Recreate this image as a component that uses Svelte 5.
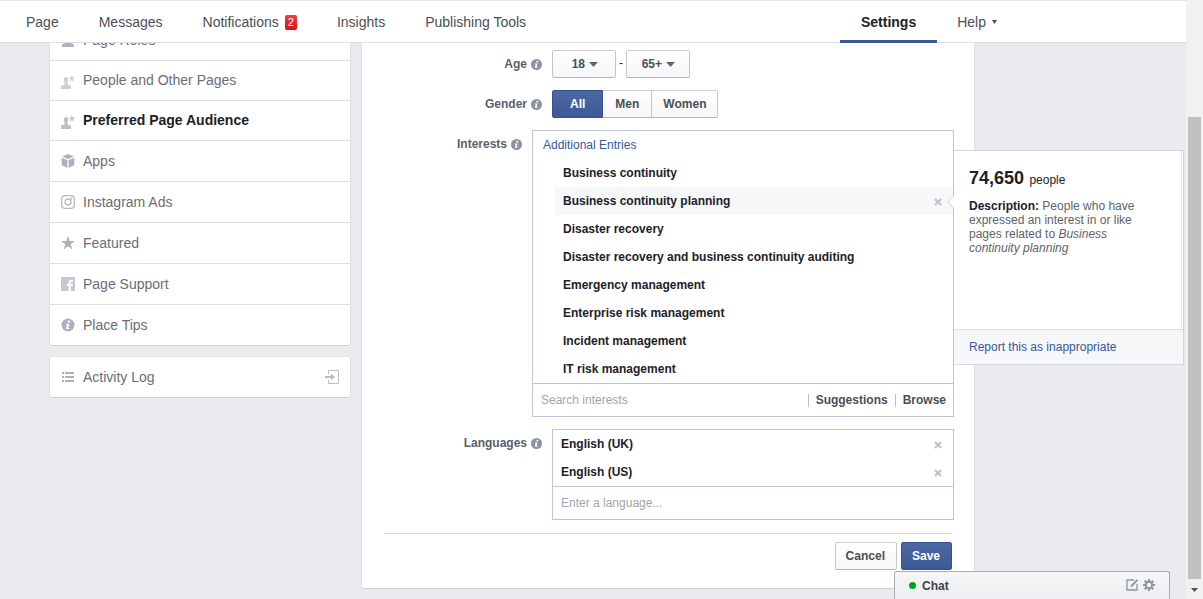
<script lang="ts">
  const tabs = [
    { label: 'Page' },
    { label: 'Messages' },
    { label: 'Notifications', count: 2 },
    { label: 'Insights' },
    { label: 'Publishing Tools' }
  ];

  const sections = [
    { label: 'Page Roles', icon: 'person', compact: true },
    { label: 'People and Other Pages', icon: 'fans', compact: true, faded: true },
    { label: 'Preferred Page Audience', icon: 'fans', compact: true },
    { label: 'Apps', icon: 'cube' },
    { label: 'Instagram Ads', icon: 'camera' },
    { label: 'Featured', icon: 'star' },
    { label: 'Page Support', icon: 'facebook' },
    { label: 'Place Tips', icon: 'info' }
  ];

  const genders = ['All', 'Men', 'Women'];

  let section = $state('Preferred Page Audience');
  let minAge = $state('18');
  let maxAge = $state('65+');
  let gender = $state('All');
  let interests = $state([
    'Business continuity',
    'Business continuity planning',
    'Disaster recovery',
    'Disaster recovery and business continuity auditing',
    'Emergency management',
    'Enterprise risk management',
    'Incident management',
    'IT risk management'
  ]);
  let hovered = $state('Business continuity planning');
  let languages = $state(['English (UK)', 'English (US)']);

  function removeInterest(name: string) {
    interests = interests.filter((i) => i !== name);
    hovered = '';
  }

  function removeLanguage(name: string) {
    languages = languages.filter((l) => l !== name);
  }
</script>

{#snippet info()}
  <svg width="11" height="11" viewBox="0 0 12 12" aria-hidden="true">
    <circle cx="6" cy="6" r="6" fill="#8c92a0" />
    <circle cx="6.900" cy="2.900" r="1.100" fill="#fff" />
    <path d="M4.400 5h2.700L6.200 8.600h.9v.9H4.200l.9-3.600h-.7z" fill="#fff" />
  </svg>
{/snippet}

{#snippet cross()}
  <svg width="8" height="8" viewBox="0 0 9 9" aria-hidden="true">
    <path d="M1 1l7 7M8 1L1 8" stroke="#bec3cc" stroke-width="2.400" />
  </svg>
{/snippet}

{#snippet caret()}
  <svg class="caret" width="9" height="5" viewBox="0 0 9 5" aria-hidden="true"><path d="M0 0h9L4.500 5z" fill="#5f6673" /></svg>
{/snippet}

{#snippet icon(name: string)}
  <svg class="icon" width="14" height="14" viewBox="0 0 14 14" fill="#acb1bd" aria-hidden="true">
    {#if name === 'person'}
      <path d="M6.500 0C8.400 0 9.200 1.400 9.200 3c0 1.500-.6 2.600-1.200 3.200v1.300l3.600 1.300c.9.400 1.200 1 1.200 2V12H1v-1.200c0-1 .3-1.600 1.200-2l3.300-1.300V6.200C4.700 5.600 4 4.500 4 3c0-1.600.8-3 2.500-3z" />
    {:else if name === 'fans'}
      <path d="M5 2c1.500 0 2.300 1 2.300 2.500 0 1.200-.3 2-.8 2.700v2.200l2.600.9c.7.300.9.700.9 1.500V14H0v-2.200c0-.8.200-1.200.9-1.500l2.600-.9V7.200c-.5-.7-.8-1.500-.8-2.700C2.700 3 3.500 2 5 2z" />
      <path d="M10.900 0l.9 2.400H14l-1.800 1.600.8 2.700-2.100-1.500-2.100 1.500.8-2.700-1.800-1.600h2.200z" />
    {:else if name === 'cube'}
      <path d="M7 0l5.800 2.500L7 5 1.200 2.500zM.7 3.700l5.700 2.400V14L.7 11zM13.300 3.700L7.600 6.100V14l5.700-3z" />
    {:else if name === 'camera'}
      <rect x=".7" y=".7" width="12.600" height="12.600" rx="3" fill="none" stroke="#b4b8c2" stroke-width="1.300" />
      <circle cx="7" cy="7" r="3" fill="none" stroke="#b4b8c2" stroke-width="1.300" />
      <circle cx="10.500" cy="3.500" r=".9" />
    {:else if name === 'star'}
      <path d="M7 0l1.700 5H14L9.700 8.200l1.600 5.300L7 10.300l-4.300 3.200 1.600-5.300L0 5h5.300z" />
    {:else if name === 'facebook'}
      <path fill="#c3c7d0" d="M1 0h12a1 1 0 0 1 1 1v12a1 1 0 0 1-1 1H9.800V9h1.900l.3-2H9.800V5.700c0-.7.300-1.100 1.100-1.100H12V2.700h-1.600c-1.900 0-2.800 1.100-2.800 2.800V7H6v2h1.600v5H1a1 1 0 0 1-1-1V1a1 1 0 0 1 1-1z" />
    {:else if name === 'info'}
      <circle cx="7" cy="7" r="6.500" />
      <circle cx="8" cy="3.600" r="1.200" fill="#fff" />
      <path d="M5.200 5.800h3.100L7.300 10h1v1H4.900l1-4.200h-.7z" fill="#fff" />
    {:else if name === 'list'}
      <path d="M1 2h2v2H1zM4 2h9v2H4zM1 6h2v2H1zM4 6h9v2H4zM1 10h2v2H1zM4 10h9v2H4z" />
    {:else if name === 'exit'}
      <path d="M3.500 4V.5h10v13h-10V10" fill="none" stroke="#b9bdc7" />
      <path d="M0 6h6V3.500L10 7l-4 3.500V8H0z" fill="#b9bdc7" />
    {/if}
  </svg>
{/snippet}

<div class="window">
  <div class="page">
    <nav class="tabs">
      <div class="group">
        {#each tabs as tab}
          <a href="#{tab.label}">
            {tab.label}
            {#if tab.count}<span class="count">{tab.count}</span>{/if}
          </a>
        {/each}
      </div>
      <div class="group">
        <a href="#settings" class="current" aria-current="page">Settings</a>
        <a href="#help">
          Help
          <svg width="5" height="4" viewBox="0 0 5 4" aria-hidden="true"><path d="M0 0h5L2.500 4z" fill="#4b4f56" /></svg>
        </a>
      </div>
    </nav>

    <div class="scroller">
      <aside>
        <ul class="menu">
          {#each sections as s}
            <li>
              <a
                href="#{s.label}"
                class:compact={s.compact}
                class:faded={s.faded}
                class:selected={section === s.label}
                onclick={() => (section = s.label)}
              >
                {@render icon(s.icon)}
                {s.label}
              </a>
            </li>
          {/each}
        </ul>
        <ul class="menu">
          <li>
            <a href="#activity">
              {@render icon('list')}
              <span class="grow">Activity Log</span>
              {@render icon('exit')}
            </a>
          </li>
        </ul>
      </aside>

      <main>
        <form onsubmit={(e) => e.preventDefault()}>
          <div class="row">
            <label class="name" for="min-age">Age {@render info()}</label>
            <div class="ages">
              <span class="drop">
                <select id="min-age" bind:value={minAge}>
                  <option>13</option>
                  <option>18</option>
                  <option>21</option>
                </select>
                {@render caret()}
              </span>
              <span class="dash">-</span>
              <span class="drop max">
                <select aria-label="Maximum age" bind:value={maxAge}>
                  <option>45</option>
                  <option>65+</option>
                </select>
                {@render caret()}
              </span>
            </div>
          </div>

          <div class="row">
            <span class="name" id="gender">Gender {@render info()}</span>
            <div class="segments" role="group" aria-labelledby="gender">
              {#each genders as g}
                <button type="button" class:on={gender === g} aria-pressed={gender === g} onclick={() => (gender = g)}>{g}</button>
              {/each}
            </div>
          </div>

          <div class="row wide">
            <label class="name" for="interests">Interests {@render info()}</label>
            <div class="tokens">
              <a class="heading" href="#entries">Additional Entries</a>
              <ul class="indent">
                {#each interests as name}
                  <li class:hovered={hovered === name} onmouseenter={() => (hovered = name)}>
                    {name}
                    {#if hovered === name}
                      <button type="button" class="remove" aria-label="Remove {name}" onclick={() => removeInterest(name)}>{@render cross()}</button>
                    {/if}
                  </li>
                {/each}
              </ul>
              <div class="entry">
                <input id="interests" type="text" placeholder="Search interests" />
                <button type="button">Suggestions</button>
                <button type="button">Browse</button>
              </div>

              <div class="flyout">
                <svg class="pointer" width="7" height="12" viewBox="0 0 7 12" aria-hidden="true">
                  <path d="M7 0L1 6l6 6" fill="#fff" stroke="#d3d6db" />
                </svg>
                <div class="details">
                  <p class="size"><strong>74,650</strong> people</p>
                  <p class="about"><b>Description:</b> People who have expressed an interest in or like pages related to <i>Business continuity planning</i></p>
                </div>
                <div class="report"><a href="#report">Report this as inappropriate</a></div>
              </div>
            </div>
          </div>

          <div class="row">
            <label class="name" for="languages">Languages {@render info()}</label>
            <div class="tokens">
              <ul>
                {#each languages as name}
                  <li>
                    {name}
                    <button type="button" class="remove" aria-label="Remove {name}" onclick={() => removeLanguage(name)}>{@render cross()}</button>
                  </li>
                {/each}
              </ul>
              <div class="entry">
                <input id="languages" type="text" placeholder="Enter a language..." />
              </div>
            </div>
          </div>

          <div class="actions">
            <button type="button">Cancel</button>
            <button type="submit" class="on">Save</button>
          </div>
        </form>
      </main>
    </div>

    <div class="chat">
      <span class="dot"></span>
      <span class="grow">Chat</span>
      <button type="button" aria-label="New message">
        <svg width="13" height="13" viewBox="0 0 13 13" fill="none" stroke="#8f95a3" aria-hidden="true">
          <path d="M8 2H1v10h10V6" stroke-width="1.300" />
          <path d="M4.500 9L5 7l5.800-5.800 1.300 1.300L6.400 8.400z" fill="#8f95a3" stroke="none" />
        </svg>
      </button>
      <button type="button" aria-label="Options">
        <svg width="12" height="12" viewBox="0 0 12 12" fill="none" stroke="#8f95a3" stroke-width="2" aria-hidden="true">
          <circle cx="6" cy="6" r="3.200" />
          <path d="M6 0v2.500M6 9.500V12M0 6h2.500M9.500 6H12M1.700 1.700l1.800 1.800M8.500 8.500l1.800 1.800M10.300 1.700L8.500 3.500M3.500 8.500l-1.800 1.800" />
        </svg>
      </button>
    </div>
  </div>

  <div class="scrollbar">
    <div class="thumb"></div>
    <svg width="17" height="20" viewBox="0 0 17 20" aria-hidden="true"><path d="M5 9h7l-3.500 4z" fill="#505050" /></svg>
  </div>
</div>

<style>
  :global(body) {
    background: #e9ebee;
    font-family: "Liberation Sans", Arial, sans-serif;
    font-size: 12px;
    color: #1d2129;
  }

  .window {
    display: flex;
    height: 100vh;
    overflow: hidden;
  }

  .page {
    position: relative;
    flex: 1;
    min-width: 0;
    display: flex;
    flex-direction: column;
  }

  ul,
  p {
    list-style: none;
    margin: 0;
    padding: 0;
  }

  a {
    color: #365899;
    text-decoration: none;
  }

  button,
  input,
  select {
    box-sizing: border-box;
    font-family: inherit;
    font-size: 12px;
    margin: 0;
  }

  button {
    cursor: pointer;
  }

  .grow {
    flex: 1;
  }

  .tabs {
    position: relative;
    z-index: 1;
    box-sizing: border-box;
    flex: none;
    height: 43px;
    display: flex;
    justify-content: space-between;
    padding: 0 169px 0 6px;
    background: #fff;
    border-top: 1px solid #e5e5e5;
    border-bottom: 1px solid #dddfe2;
  }

  .group {
    display: flex;
  }

  .group a {
    display: flex;
    align-items: center;
    gap: 6px;
    height: 42px;
    padding: 0 20px;
    font-size: 14px;
    color: #4b4f56;
    box-sizing: border-box;
  }

  .group .current {
    padding: 3px 21px 0;
    border-bottom: 3px solid #3b5998;
    font-weight: bold;
    color: #1d2129;
  }

  .count {
    padding: 0 3px;
    border-radius: 2px;
    background: linear-gradient(#f03d45, #dc0d17);
    color: #fff;
    font-size: 11px;
    line-height: 15px;
  }

  .scroller {
    flex: 1;
    min-height: 0;
    display: flex;
    align-items: flex-start;
    gap: 10px;
    padding-left: 49px;
    overflow: hidden;
  }

  aside {
    flex: none;
    width: 302px;
    box-sizing: border-box;
    margin-top: -23px;
  }

  .menu {
    margin-bottom: 10px;
    background: #fff;
    border: 1px solid;
    border-color: #e2e4e8 #dfe0e4 #d0d1d5;
    border-radius: 3px;
  }

  .menu li + li {
    border-top: 1px solid #dddfe2;
  }

  .menu a {
    display: flex;
    align-items: center;
    gap: 8px;
    height: 40px;
    padding: 0 11px;
    font-size: 14px;
    color: #6a6e76;
  }

  .menu a.compact {
    height: 39px;
    line-height: 39px;
    align-items: flex-start;
  }

  .compact .icon {
    margin-top: 14px;
  }

  .menu a.selected {
    font-weight: bold;
    color: #1d2129;
  }

  .faded .icon {
    opacity: 0.6;
  }

  .selected .icon {
    opacity: 0.8;
  }

  .icon {
    flex: none;
  }

  main {
    flex: none;
    width: 612px;
    background: #fff;
    border: 1px solid;
    border-color: #e2e4e8 #dfe0e4 #d0d1d5;
    border-top: none;
    border-radius: 0 0 3px 3px;
  }

  form {
    display: flex;
    flex-direction: column;
    gap: 12px;
    padding: 7px 20px 18px 0;
  }

  .row {
    display: grid;
    grid-template-columns: 180px 1fr;
    column-gap: 10px;
  }

  .row.wide {
    grid-template-columns: 160px 1fr;
  }

  .name {
    display: flex;
    justify-content: flex-end;
    align-items: center;
    gap: 4px;
    height: 28px;
    font-weight: bold;
    color: #5a5f69;
  }

  .ages,
  .segments {
    display: flex;
  }

  .dash {
    width: 10px;
    line-height: 26px;
    text-align: center;
  }

  .drop {
    position: relative;
  }

  .caret {
    position: absolute;
    top: 12px;
    right: 18px;
    pointer-events: none;
  }

  .max .caret {
    right: 15px;
  }

  select,
  .segments button,
  .actions button {
    height: 28px;
    border: 1px solid;
    border-color: #cccdd1 #c5c6ca #b6b7bb;
    border-radius: 2px;
    background: linear-gradient(#fff, #f5f6f8);
    color: #4b4f56;
    font-weight: bold;
  }

  select {
    appearance: none;
    width: 64px;
    padding: 0 30px 0 0;
    text-align: right;
    text-align-last: right;
  }

  .max select {
    padding-right: 27px;
  }

  .segments button {
    padding: 0 12px;
    border-radius: 0;
  }

  .segments button + button {
    border-left: none;
  }

  .segments button:first-child {
    padding: 0 17px;
    border-radius: 2px 0 0 2px;
  }

  .segments button:last-child {
    padding: 0 11px;
    border-radius: 0 2px 2px 0;
  }

  .segments button.on,
  .actions button.on {
    border: 1px solid #35528c;
    background: linear-gradient(#4e69a2, #3b5998);
    color: #fff;
  }

  .tokens {
    position: relative;
    border: 1px solid #bdc7d8;
  }

  .heading {
    display: block;
    padding-left: 10px;
    line-height: 28px;
  }

  .indent {
    margin-left: 22px;
  }

  .tokens li {
    display: flex;
    justify-content: space-between;
    align-items: center;
    height: 28px;
    padding: 0 11px 0 8px;
    font-weight: bold;
  }

  .tokens li.hovered {
    background: #f6f7f9;
  }

  .remove {
    display: flex;
    padding: 2px 0 0;
    border: none;
    background: none;
  }

  .entry {
    display: flex;
    align-items: center;
    height: 32px;
    border-top: 1px solid #bdc7d8;
  }

  .entry input {
    flex: 1;
    min-width: 0;
    height: 32px;
    padding: 0 8px;
    border: none;
    outline: none;
    background: none;
    color: #1d2129;
  }

  .entry input::placeholder {
    color: #a3a4a8;
    opacity: 1;
  }

  .entry button {
    padding: 0 7px;
    border: none;
    border-left: 1px solid #bdc1c9;
    background: none;
    color: #4b4f56;
    font-weight: bold;
    line-height: 13px;
  }

  /* hangs off the right edge of the interests box */
  .flyout {
    position: absolute;
    top: 19px;
    left: 100%;
    width: 229px;
    border: 1px solid #d3d6db;
    border-left: none;
    margin-left: 1px;
    background: #fff;
  }

  .pointer {
    position: absolute;
    top: 45px;
    left: -7px;
  }

  .details {
    box-sizing: border-box;
    min-height: 178px;
    margin-right: 1px;
    padding: 17px 30px 0 15px;
    border-right: 1px solid #e5e5e8;
  }

  .size {
    line-height: 20px;
  }

  .size strong {
    font-size: 18px;
    margin-right: 2px;
  }

  .about {
    margin-top: 9px;
    line-height: 14px;
    color: #5f636b;
  }

  .about b {
    color: #1d2129;
  }

  .report {
    padding: 0 15px;
    border-top: 1px solid #dddfe2;
    background: #f6f7f9;
    line-height: 34px;
  }

  .actions {
    display: flex;
    justify-content: flex-end;
    gap: 4px;
    margin: 1px 2px 0 22px;
    padding-top: 8px;
    border-top: 1px solid #d8dade;
  }

  .actions button {
    padding: 0 11px 0 10px;
  }

  .chat {
    position: absolute;
    z-index: 2;
    right: 16px;
    bottom: 0;
    box-sizing: border-box;
    width: 276px;
    height: 28px;
    display: flex;
    align-items: center;
    gap: 6px;
    padding: 0 14px;
    border: 1px solid #a8adb8;
    border-bottom: none;
    border-radius: 3px 3px 0 0;
    background: linear-gradient(#f7f7f8, #ebedf0);
    font-weight: bold;
    color: #3e4249;
  }

  .chat button {
    display: flex;
    padding: 0 0 2px;
    border: none;
    background: none;
  }

  .chat button + button {
    margin-left: -2px;
  }

  .dot {
    width: 7px;
    height: 7px;
    border-radius: 50%;
    background: #00a41a;
  }

  .scrollbar {
    flex: none;
    width: 17px;
    display: flex;
    flex-direction: column;
    background: #f1f1f1;
  }

  .thumb {
    flex: 1;
    margin: 117px 2px 0;
    background: #c1c1c1;
  }
</style>
